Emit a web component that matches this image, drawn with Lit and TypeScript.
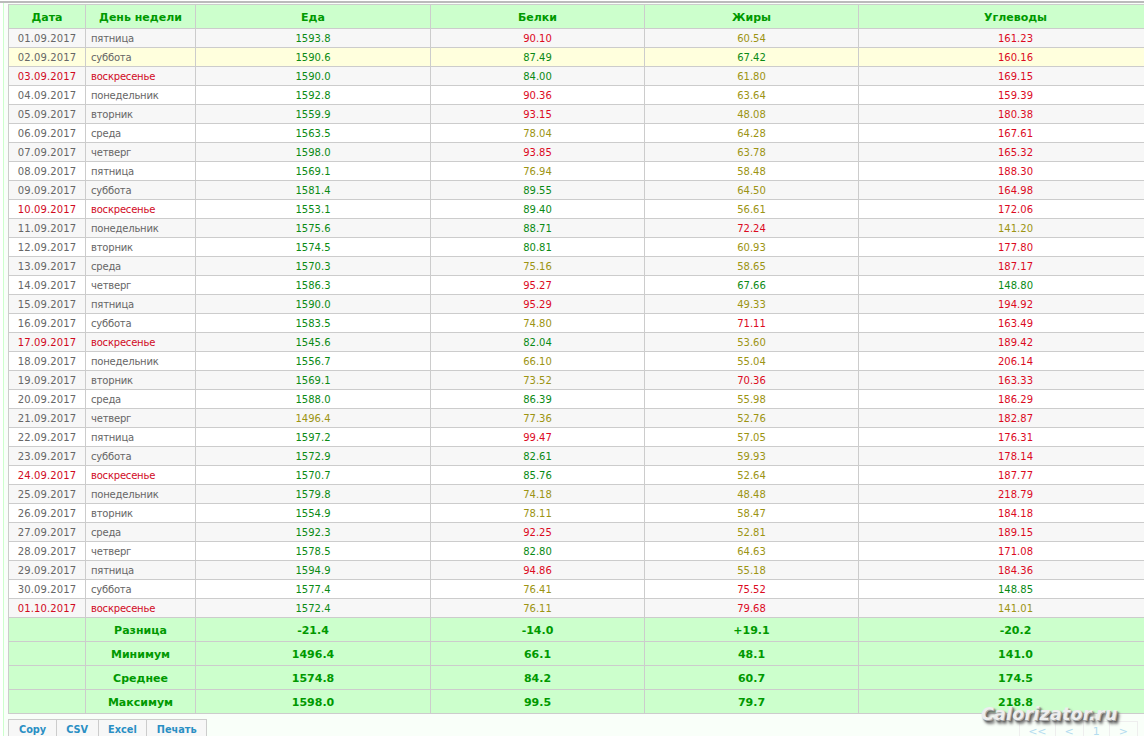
import { LitElement, html, css } from "lit";
import { customElement } from "lit/decorators.js";

type C = "g" | "o" | "r";
const R: [string, string, string, C, string, C, string, C, string, C][] = [
["01.09.2017","пятница","1593.8","g","90.10","r","60.54","o","161.23","r"],
["02.09.2017","суббота","1590.6","g","87.49","g","67.42","g","160.16","r"],
["03.09.2017","воскресенье","1590.0","g","84.00","g","61.80","o","169.15","r"],
["04.09.2017","понедельник","1592.8","g","90.36","r","63.64","o","159.39","r"],
["05.09.2017","вторник","1559.9","g","93.15","r","48.08","o","180.38","r"],
["06.09.2017","среда","1563.5","g","78.04","o","64.28","o","167.61","r"],
["07.09.2017","четверг","1598.0","g","93.85","r","63.78","o","165.32","r"],
["08.09.2017","пятница","1569.1","g","76.94","o","58.48","o","188.30","r"],
["09.09.2017","суббота","1581.4","g","89.55","g","64.50","o","164.98","r"],
["10.09.2017","воскресенье","1553.1","g","89.40","g","56.61","o","172.06","r"],
["11.09.2017","понедельник","1575.6","g","88.71","g","72.24","r","141.20","o"],
["12.09.2017","вторник","1574.5","g","80.81","g","60.93","o","177.80","r"],
["13.09.2017","среда","1570.3","g","75.16","o","58.65","o","187.17","r"],
["14.09.2017","четверг","1586.3","g","95.27","r","67.66","g","148.80","g"],
["15.09.2017","пятница","1590.0","g","95.29","r","49.33","o","194.92","r"],
["16.09.2017","суббота","1583.5","g","74.80","o","71.11","r","163.49","r"],
["17.09.2017","воскресенье","1545.6","g","82.04","g","53.60","o","189.42","r"],
["18.09.2017","понедельник","1556.7","g","66.10","o","55.04","o","206.14","r"],
["19.09.2017","вторник","1569.1","g","73.52","o","70.36","r","163.33","r"],
["20.09.2017","среда","1588.0","g","86.39","g","55.98","o","186.29","r"],
["21.09.2017","четверг","1496.4","o","77.36","o","52.76","o","182.87","r"],
["22.09.2017","пятница","1597.2","g","99.47","r","57.05","o","176.31","r"],
["23.09.2017","суббота","1572.9","g","82.61","g","59.93","o","178.14","r"],
["24.09.2017","воскресенье","1570.7","g","85.76","g","52.64","o","187.77","r"],
["25.09.2017","понедельник","1579.8","g","74.18","o","48.48","o","218.79","r"],
["26.09.2017","вторник","1554.9","g","78.11","o","58.47","o","184.18","r"],
["27.09.2017","среда","1592.3","g","92.25","r","52.81","o","189.15","r"],
["28.09.2017","четверг","1578.5","g","82.80","g","64.63","o","171.08","r"],
["29.09.2017","пятница","1594.9","g","94.86","r","55.18","o","184.36","r"],
["30.09.2017","суббота","1577.4","g","76.41","o","75.52","r","148.85","g"],
["01.10.2017","воскресенье","1572.4","g","76.11","o","79.68","r","141.01","o"],
];
const F = [
["Разница","-21.4","-14.0","+19.1","-20.2"],
["Минимум","1496.4","66.1","48.1","141.0"],
["Среднее","1574.8","84.2","60.7","174.5"],
["Максимум","1598.0","99.5","79.7","218.8"],
];

@customElement("app-root")
export class AppRoot extends LitElement {
  static styles = css`
    :host { display: block; height: 736px; overflow: hidden; position: relative; background: #fff;
      font-family: "DejaVu Sans", Verdana, sans-serif; font-size: 10px; color: #666; }
    .frame { margin-left: 3px; height: 736px; border-left: 1px solid #cfc; background: #f9fff9; padding-left: 4px; box-sizing: border-box; }
    .rule { height: 2px; margin: 1px 0 1px -8px; background: #bbb; }
    table { border-collapse: collapse; table-layout: fixed; width: 1164px; }
    th, td { border: 1px solid #ccc; padding: 1px 0 0; text-align: center; }
    thead th { height: 22px; background: #cfc; color: #090; font-size: 11px; font-weight: bold; }
    tbody td { height: 17px; line-height: 17px; background: #fff; }
    tbody tr:nth-child(odd) td { background: #f7f7f7; }
    tbody tr.hl td { background: #ffd; }
    tbody td.date { color: #666; letter-spacing: 0.1px; }
    tbody td.day { text-align: left; padding-left: 5px; color: #666; letter-spacing: -0.2px; }
    tbody tr.sun td.date, tbody tr.sun td.day { color: #d10a1e; }
    td.g { color: #0a8a14; }
    td.o { color: #9c9412; }
    td.r { color: #dc0a1e; }
    tfoot td { height: 22px; background: #cfc; color: #090; font-size: 11px; font-weight: bold; }
    .tools { display: flex; justify-content: space-between; margin-top: 5px; }
    .btns { display: flex; }
    .btns span { border: 1px solid #ccc; border-left-width: 0; background: #f7f7f7; color: #2a8fc4; font-weight: bold; font-size: 9.75px; height: 20px; line-height: 20px; padding: 0 9.5px; }
    .btns span:first-child { border-left-width: 1px; padding-left: 10px; }
    .pager { display: flex; margin-top: 2px; margin-right: 6px; color: #b4dcf0; }
    .pager span { border: 1px solid #eee; border-left-width: 0; border-bottom: 0; height: 20px; line-height: 20px; padding: 0 9px; font-size: 11px; }
    .pager span:first-child { border-left-width: 1px; padding: 0 8px; }
    .wm { position: absolute; left: 981px; top: 704px; font: italic bold 17.5px "DejaVu Sans", sans-serif; color: #eee;
      letter-spacing: 0.2px; text-shadow: 1px 1px 0 #aaa, 2px 2px 2px #555, 3px 4px 3px #777; }
  `;
  render() {
    return html`<div class="frame">
      <div class="rule"></div>
      <table>
        <colgroup><col style="width:77px"><col style="width:110px"><col style="width:235px"><col style="width:214px"><col style="width:214px"><col style="width:314px"></colgroup>
        <thead><tr><th>Дата</th><th>День недели</th><th>Еда</th><th>Белки</th><th>Жиры</th><th>Углеводы</th></tr></thead>
        <tbody>
          ${R.map((r, i) => html`<tr class="${r[1] === "воскресенье" ? "sun" : ""} ${i === 1 ? "hl" : ""}">
            <td class="date">${r[0]}</td><td class="day">${r[1]}</td>
            <td class=${r[3]}>${r[2]}</td><td class=${r[5]}>${r[4]}</td><td class=${r[7]}>${r[6]}</td><td class=${r[9]}>${r[8]}</td>
          </tr>`)}
        </tbody>
        <tfoot>${F.map((f) => html`<tr><td></td>${f.map((v) => html`<td>${v}</td>`)}</tr>`)}</tfoot>
      </table>
      <div class="tools">
        <div class="btns"><span>Copy</span><span>CSV</span><span>Excel</span><span>Печать</span></div>
        <div class="pager"><span>&lt;&lt;</span><span>&lt;</span><span>1</span><span>&gt;</span></div>
      </div>
    </div>
    <div class="wm">Calorizator.ru</div>`;
  }
}
